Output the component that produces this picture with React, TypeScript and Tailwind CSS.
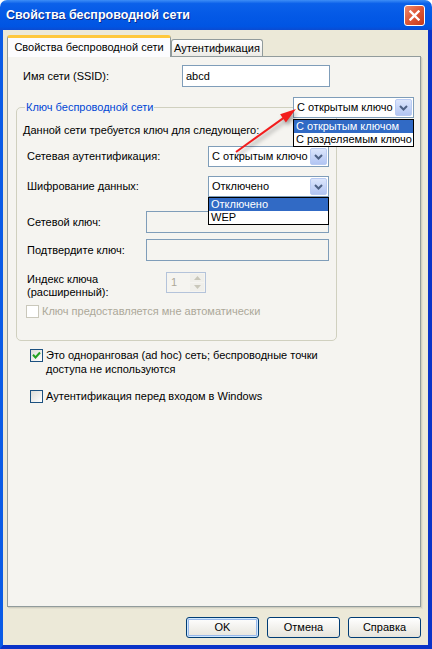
import React from 'react'

// Windows XP style "wireless network properties" dialog

function ChevronButton() {
  return (
    <div className="w-[17px] h-[17px] shrink-0 rounded-[2px] border border-[#b9cbf3] bg-gradient-to-b from-[#dce6fc] to-[#b2c5f3] flex items-center justify-center">
      <svg width="9" height="6" viewBox="0 0 9 6">
        <path d="M1 1 L4.5 4.5 L8 1" fill="none" stroke="#4d6185" strokeWidth="2" />
      </svg>
    </div>
  )
}

function Combo({ text, className = '' }: { text: string; className?: string }) {
  return (
    <div className={`h-[21px] border border-[#7f9db9] bg-white flex items-center pl-[3px] pr-[1px] ${className}`}>
      <span className="flex-1 min-w-0 whitespace-nowrap">{text}</span>
      <ChevronButton />
    </div>
  )
}

function DropList({ items, selected, className = '' }: { items: string[]; selected: number; className?: string }) {
  return (
    <div className={`border border-black bg-white ${className}`}>
      {items.map((item, i) => (
        <div
          key={item}
          className={`h-[13px] leading-[13px] pl-[2px] whitespace-nowrap ${
            i === selected ? 'bg-[#316ac5] text-white' : 'text-black'
          }`}
        >
          {item}
        </div>
      ))}
    </div>
  )
}

function CheckBox({ checked = false, disabled = false }: { checked?: boolean; disabled?: boolean }) {
  return (
    <div
      className={`w-[13px] h-[13px] shrink-0 border flex items-center justify-center ${
        disabled ? 'border-[#cac8bb] bg-white' : 'border-[#1c5180] bg-gradient-to-br from-[#dcdcd7] to-white'
      }`}
    >
      {checked && (
        <svg width="9" height="9" viewBox="0 0 9 9">
          <path d="M1 3.8 L3.5 6.5 L8 1.5" fill="none" stroke="#21a121" strokeWidth="2" />
        </svg>
      )}
    </div>
  )
}

function Button({ label, isDefault = false }: { label: string; isDefault?: boolean }) {
  return (
    <div
      className={`w-[73px] h-[21px] rounded-[3px] border border-[#003c74] bg-gradient-to-b from-white to-[#e6e4dc] flex items-center justify-center ${
        isDefault ? 'shadow-[inset_0_0_0_1px_#cee7ff,inset_0_0_0_2px_#98b8ea]' : ''
      }`}
    >
      {label}
    </div>
  )
}

export default function App() {
  return (
    <div className="relative w-[432px] h-[649px] flex flex-col overflow-hidden font-['Liberation_Sans',sans-serif] text-[11px] leading-[13px] text-black">
      {/* title bar */}
      <div className="h-[30px] shrink-0 flex items-center pl-[6px] pr-[7px] rounded-t-[7px] bg-[linear-gradient(to_bottom,#3d8ef6_0%,#0b61ea_12%,#0459e6_50%,#0055e3_88%,#0a4bd2_100%)]">
        <span className="flex-1 text-white font-bold text-[12.5px] [text-shadow:1px_1px_0_#0a2a8a]">
          Свойства беспроводной сети
        </span>
        <div className="w-[21px] h-[21px] rounded-[3px] border border-white bg-[linear-gradient(135deg,#ee8a6e_0%,#e05a3a_45%,#c5391a_100%)] flex items-center justify-center">
          <svg width="11" height="11" viewBox="0 0 11 11">
            <path d="M1.5 1.5 L9.5 9.5 M9.5 1.5 L1.5 9.5" stroke="white" strokeWidth="2.4" strokeLinecap="square" />
          </svg>
        </div>
      </div>

      <div className="flex-1 flex flex-col bg-[#ece9d8] border-l-[3px] border-r-[4px] border-b-[4px] border-l-[#0a5be6] border-r-[#0a33c8] border-b-[#0a33c8] pt-[5px] pl-[4px] pr-[7px]">
        {/* tabs */}
        <div className="h-[21px] flex items-end relative z-10">
          <div className="w-[164px] h-[22px] -mb-[1px] bg-[#fcfcfe] border-x border-[#919b9c] border-t-[3px] border-t-[#ffc83c] rounded-t-[3px] flex items-center justify-center">
            Свойства беспроводной сети
          </div>
          <div className="w-[92px] h-[17px] border border-b-0 border-[#919b9c] rounded-t-[3px] bg-gradient-to-b from-white to-[#ecebe6] flex items-center justify-center">
            Аутентификация
          </div>
        </div>

        {/* tab page */}
        <div className="h-[551px] border border-[#919b9c] bg-[#f5f4f0] shadow-[1px_1px_0_#d0cebf,2px_2px_0_#e2dfd0] pt-[8px] pl-[8px]">
          <div className="flex items-center h-[22px] pl-[7px]">
            <span className="w-[159px]">Имя сети (SSID):</span>
            <div className="w-[148px] h-[22px] border border-[#7f9db9] bg-white flex items-center pl-[3px]">abcd</div>
          </div>

          <fieldset className="mt-[14px] w-[321px] h-[240px] border border-[#d0d0bf] rounded-[5px] pl-[6px]">
            <legend className="ml-[2px] px-[1px] text-[#0046d5]">Ключ беспроводной сети</legend>
            <div className="mt-[10px]">Данной сети требуется ключ для следующего:</div>

            <div className="mt-[9px] flex items-center pl-[4px]">
              <span className="w-[181px]">Сетевая аутентификация:</span>
              <Combo text="С открытым ключо" className="w-[121px]" />
            </div>

            <div className="mt-[9px] flex items-center pl-[4px]">
              <span className="w-[181px]">Шифрование данных:</span>
              <div className="relative z-10">
                <Combo text="Отключено" className="w-[121px]" />
                <DropList items={['Отключено', 'WEP']} selected={0} className="absolute left-0 top-full w-[121px]" />
              </div>
            </div>

            <div className="mt-[14px] flex items-center pl-[4px]">
              <span className="w-[119px]">Сетевой ключ:</span>
              <div className="w-[183px] h-[22px] border border-[#7f9db9]" />
            </div>

            <div className="mt-[6px] flex items-center pl-[4px]">
              <span className="w-[119px]">Подтвердите ключ:</span>
              <div className="w-[183px] h-[22px] border border-[#7f9db9]" />
            </div>

            <div className="mt-[11px] flex items-start pl-[4px]">
              <span className="w-[139px] mt-[1px]">
                Индекс ключа
                <br />
                (расширенный):
              </span>
              <div className="w-[40px] h-[21px] border border-[#b4c3da] flex">
                <span className="flex-1 pl-[4px] leading-[19px] text-[#aca899]">1</span>
                <div className="w-[16px] flex flex-col gap-[1px] p-[1px]">
                  <div className="flex-1 bg-[#f0efea] flex items-center justify-center">
                    <svg width="7" height="4" viewBox="0 0 7 4"><path d="M0 4 L3.5 0 L7 4 Z" fill="#c9c7ba" /></svg>
                  </div>
                  <div className="flex-1 bg-[#f0efea] flex items-center justify-center">
                    <svg width="7" height="4" viewBox="0 0 7 4"><path d="M0 0 L3.5 4 L7 0 Z" fill="#c9c7ba" /></svg>
                  </div>
                </div>
              </div>
            </div>

            <div className="mt-[6px] flex items-center gap-[3px] pl-[3px]">
              <CheckBox disabled />
              <span className="text-[#aca899]">Ключ предоставляется мне автоматически</span>
            </div>
          </fieldset>

          <div className="mt-[7px] flex items-start gap-[3px] pl-[14px] leading-[14px]">
            <div className="pt-[1px]">
              <CheckBox checked />
            </div>
            <span>
              Это одноранговая (ad hoc) сеть; беспроводные точки
              <br />
              доступа не используются
            </span>
          </div>

          <div className="mt-[14px] flex items-center gap-[3px] pl-[14px]">
            <CheckBox />
            <span>Аутентификация перед входом в Windows</span>
          </div>
        </div>

        {/* dialog buttons */}
        <div className="mt-[10px] flex justify-end gap-[8px]">
          <Button label="OK" isDefault />
          <Button label="Отмена" />
          <Button label="Справка" />
        </div>
      </div>

      {/* open authentication list callout */}
      <div className="absolute left-[293px] top-[97px] w-[121px] z-20">
        <Combo text="С открытым ключо" className="h-[19px]" />
        <DropList items={['С открытым ключом', 'С разделяемым ключо']} selected={0} className="mt-[1px]" />
      </div>

      <svg
        className="absolute left-[230px] top-[100px] z-30 overflow-visible [filter:drop-shadow(2px_3px_2px_rgba(0,0,0,0.35))]"
        width="75"
        height="60"
        viewBox="0 0 75 60"
      >
        <path d="M6 52 L54 17.6" stroke="#f21d1d" strokeWidth="2" />
        <path d="M66 9 L55.9 22.4 L50.1 14.2 Z" fill="#f21d1d" />
      </svg>
    </div>
  )
}
